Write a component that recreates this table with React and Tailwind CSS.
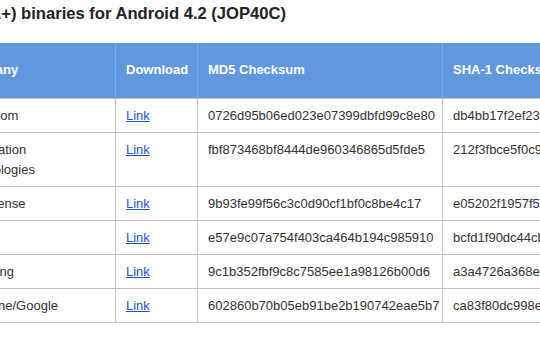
import React from 'react';

const rows = [
  { part: 'Wi-Fi, Bluetooth, GPS', company: 'Broadcom', md5: '0726d95b06ed023e07399dbfd99c8e80', sha1: 'db4bb17f2ef23f5c1a0c47e3e5d0b8a1f94c2e76' },
  { part: 'Graphics', company: 'Imagination Technologies', md5: 'fbf873468bf8444de960346865d5fde5', sha1: '212f3fbce5f0c9a8b7e41d2c6f03b95e8a7d14c0' },
  { part: 'Sensors', company: 'Invensense', md5: '9b93fe99f56c3c0d90cf1bf0c8be4c17', sha1: 'e05202f1957f5c3e8d1a64b0f29e7c5d13a8b642' },
  { part: 'NFC', company: 'NXP', md5: 'e57e9c07a754f403ca464b194c985910', sha1: 'bcfd1f90dc44cb7a2e35f0d816c94e3b7a05d2f1' },
  { part: 'Audio, Camera', company: 'Samsung', md5: '9c1b352fbf9c8c7585ee1a98126b00d6', sha1: 'a3a4726a368ea0d5c2f91b7e48a3c06d5e92f7b8' },
  { part: 'Media, DRM', company: 'Widevine/Google', md5: '602860b70b05eb91be2b190742eae5b7', sha1: 'ca83f80dc998e4b16a3d57c2f09e81b4d6c7a530' },
];

const th = 'h-[55px] px-[10px] text-left align-middle font-bold text-white border-x border-[#78aaf2]';
const td = 'px-[10px] pt-[7px] pb-[6px] align-top border border-[#c2c2c2]';

export default function App() {
  return (
    <div className="w-[540px] h-[343px] overflow-hidden bg-white" style={{ fontFamily: '"Liberation Sans", Arial, sans-serif' }}>
      <div className="ml-[-212px] w-[1000px]">
        <h3 className="ml-[7px] pt-[4px] h-[43px] text-[16.6px] leading-[20px] font-bold text-[#222] whitespace-nowrap">
          Galaxy Nexus (GSM/HSPA+) binaries for Android 4.2 (JOP40C)
        </h3>
        <table className="table-fixed w-[964px] border-collapse text-[13px] leading-5 text-[#333]">
          <colgroup>
            <col className="w-[160px]" />
            <col className="w-[167px]" />
            <col className="w-[82px]" />
            <col className="w-[245px]" />
            <col className="w-[310px]" />
          </colgroup>
          <thead>
            <tr className="bg-[#6097dd]">
              <th className={th}>Hardware Component</th>
              <th className={th}>Company</th>
              <th className={th}>Download</th>
              <th className={th}>MD5 Checksum</th>
              <th className={th}>SHA-1 Checksum</th>
            </tr>
          </thead>
          <tbody>
            {rows.map((r) => (
              <tr key={r.md5}>
                <td className={td}>{r.part}</td>
                <td className={td}>{r.company}</td>
                <td className={td}>
                  <a href="#" className="text-[#1a56cc] underline">Link</a>
                </td>
                <td className={td}>{r.md5}</td>
                <td className={td}>{r.sha1}</td>
              </tr>
            ))}
          </tbody>
        </table>
      </div>
    </div>
  );
}
